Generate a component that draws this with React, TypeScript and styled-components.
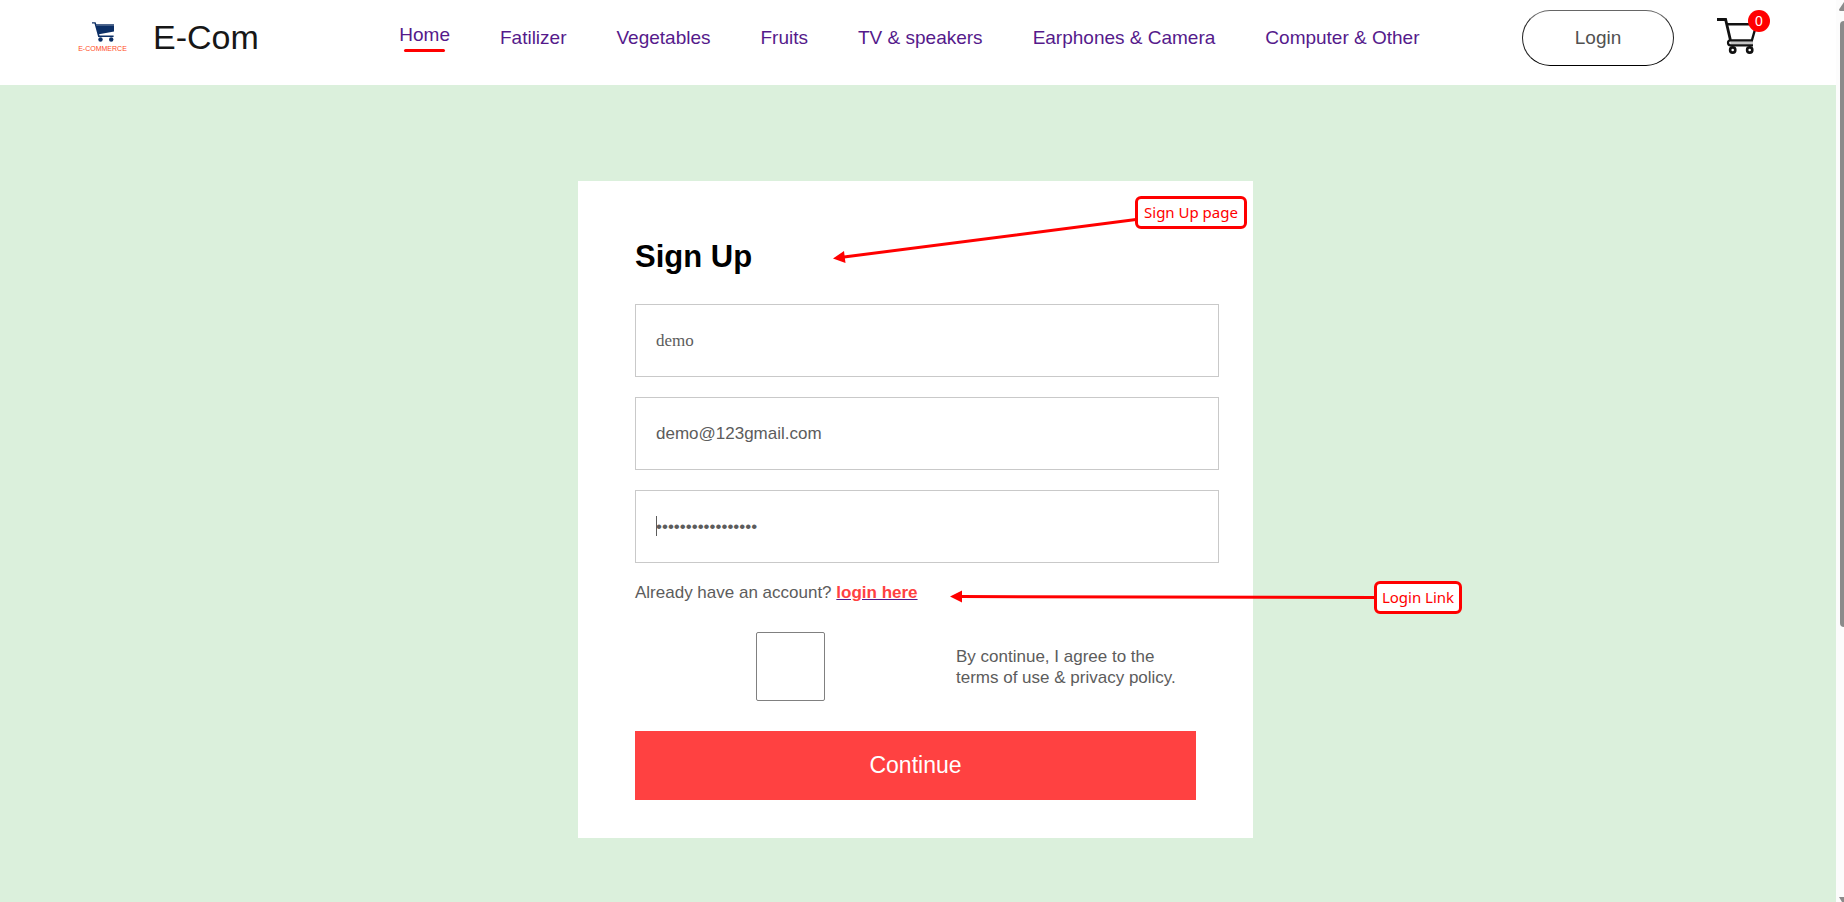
import React from "react";
import styled, { createGlobalStyle } from "styled-components";

const GlobalStyle = createGlobalStyle`
  *, *::before, *::after { box-sizing: border-box; }
  body {
    margin: 0;
    background: #ffffff;
    font-family: "Liberation Sans", Arial, sans-serif;
  }
`;

const Window = styled.div`
  display: grid;
  grid-template-columns: minmax(0, 1fr) 8px;
  min-height: 100vh;
`;

const Page = styled.div`
  display: flex;
  flex-direction: column;
`;

const Header = styled.header`
  display: flex;
  align-items: center;
  justify-content: space-between;
  padding: 10px 66px 19px 78px;
  background: #ffffff;
`;

const Brand = styled.a`
  display: flex;
  align-items: center;
  gap: 26px;
  padding: 0 38px 2px 0;
  color: #171717;
  text-decoration: none;
`;

const Logo = styled.span`
  display: flex;
  flex-direction: column;
  align-items: center;
  gap: 3px;
  width: 49px;
`;

const LogoText = styled.span`
  color: #ff4a24;
  font-size: 7px;
  line-height: 8px;
`;

const BrandName = styled.span`
  font-size: 34px;
  line-height: 38px;
`;

const Menu = styled.ul`
  display: flex;
  align-items: center;
  gap: 50px;
  margin: 0;
  padding: 0;
  list-style: none;
`;

const MenuItem = styled.li<{ $active?: boolean }>`
  display: flex;
  flex-direction: column;
  align-items: center;
  gap: 3px;
  font-size: 19px;
  line-height: 22px;
  white-space: nowrap;

  &::after {
    content: "";
    display: ${(p) => (p.$active ? "block" : "none")};
    width: 80%;
    height: 3px;
    border-radius: 10px;
    background: #ff0000;
  }
`;

const MenuLink = styled.a`
  color: #551a8b;
  text-decoration: none;
`;

const Actions = styled.div`
  display: flex;
  align-items: center;
  gap: 43px;
`;

const LoginButton = styled.button`
  width: 152px;
  height: 56px;
  border: 1px solid #222222;
  border-top-color: #666666;
  border-bottom-color: #000000;
  border-radius: 28px;
  background: #ffffff;
  color: #515151;
  font-family: inherit;
  font-size: 19px;
`;

const CartLink = styled.a`
  position: relative;
  display: block;
  width: 53px;
  height: 40px;
`;

const CartCount = styled.span`
  position: absolute;
  top: -8px;
  right: 0;
  width: 22px;
  height: 22px;
  border-radius: 11px;
  background: #ff0000;
  color: #ffffff;
  font-size: 14px;
  line-height: 22px;
  text-align: center;
`;

const Main = styled.main`
  flex: 1;
  display: flex;
  justify-content: center;
  align-items: flex-start;
  padding: 96px 5px 64px 0;
  background: #dbf0dc;
`;

const Card = styled.form`
  position: relative;
  width: 675px;
  padding: 58px 57px 38px;
  background: #ffffff;
  color: #5c5c5c;
  font-size: 17px;
  line-height: 21px;
`;

const Title = styled.h1`
  margin: 0 0 29px;
  color: #000000;
  font-size: 31px;
  line-height: 36px;
`;

const Fields = styled.div`
  display: flex;
  flex-direction: column;
  gap: 20px;
  width: calc(100% + 23px);
`;

const Field = styled.div`
  position: relative;
`;

const Input = styled.input<{ $serif?: boolean }>`
  display: block;
  width: 100%;
  height: 73px;
  padding: 0 20px;
  border: 1px solid #c9c9c9;
  outline: none;
  background: #ffffff;
  color: #5c5c5c;
  font-family: ${(p) =>
    p.$serif ? '"Liberation Serif", "Times New Roman", serif' : "inherit"};
  font-size: 17px;
`;

const Caret = styled.span`
  position: absolute;
  top: 26px;
  left: 21px;
  width: 1px;
  height: 20px;
  background: #5c5c5c;
`;

const LoginPrompt = styled.p`
  margin: 19px 0 0;
`;

const LoginHere = styled.a`
  color: #ff4141;
  font-weight: bold;
  text-decoration: underline #551a8b;
`;

const Terms = styled.div`
  display: flex;
  align-items: center;
  gap: 10px;
  margin: 29px 0 30px;
`;

const TickCell = styled.div`
  flex: 1;
  display: flex;
  justify-content: center;
`;

const Tick = styled.input`
  appearance: none;
  width: 69px;
  height: 69px;
  margin: 0;
  border: 1px solid #808080;
  border-radius: 2px;
  background: #ffffff;
`;

const TermsLabel = styled.label`
  width: 240px;
`;

const ContinueButton = styled.button`
  display: block;
  width: 100%;
  height: 69px;
  border: none;
  background: #ff4141;
  color: #ffffff;
  font-family: inherit;
  font-size: 23px;
`;

const Arrows = styled.svg`
  position: absolute;
  top: 0;
  left: 0;
  overflow: visible;
  pointer-events: none;
`;

const Callout = styled.div<{ $left: number; $top: number; $width: number }>`
  position: absolute;
  left: ${(p) => p.$left}px;
  top: ${(p) => p.$top}px;
  width: ${(p) => p.$width}px;
  height: 33px;
  border: 3px solid #ff0000;
  border-radius: 6px;
  background: #ffffff;
  color: #ff0000;
  font-family: "Noto Sans", sans-serif;
  font-size: 15px;
  line-height: 27px;
  text-align: center;
  white-space: nowrap;
`;

const Scrollbar = styled.div`
  display: flex;
  flex-direction: column;
  align-items: flex-end;
  overflow: hidden;
  background: #fcfcfc;
`;

const ScrollArrow = styled.svg`
  display: block;
  margin: 2px 0 10px;
`;

const ScrollThumb = styled.div`
  flex: 1;
  width: 4px;
  border-radius: 4px 0 0 4px;
  background: #8b8b8b;
`;

const ScrollRest = styled.div`
  height: 270px;
`;

const menu = [
  "Home",
  "Fatilizer",
  "Vegetables",
  "Fruits",
  "TV & speakers",
  "Earphones & Camera",
  "Computer & Other",
];

const LogoCart = () => (
  <svg width="22" height="20" viewBox="0 0 22 20" aria-hidden="true">
    <path d="M0 .3h3.6l.7 1.9H22V9.4L7 12.2l.5 1.2H21.6V15H6.2L2.5 1.6H0z" fill="#0c2f66" />
    <path d="M4.2 3.2H22" stroke="#5d7396" strokeWidth="1" />
    <circle cx="8.5" cy="17.5" r="2.2" fill="#0c2f66" />
    <circle cx="19.2" cy="17.5" r="2.2" fill="#0c2f66" />
  </svg>
);

const Cart = () => (
  <svg width="42" height="40" viewBox="0 0 42 40" fill="none" aria-hidden="true">
    <path d="M0 1.5H8.6L13.4 22" stroke="#111" strokeWidth="2.8" />
    <path d="M10.2 6.3H39.5L35 22" stroke="#111" strokeWidth="2.4" />
    <path d="M13.5 24.8H36" stroke="#c4c4c4" strokeWidth="3" />
    <path d="M36 22.3H13.5a2.5 2.5 0 0 0 0 5H36" stroke="#111" strokeWidth="2.2" />
    <circle cx="15.7" cy="32" r="2.6" stroke="#111" strokeWidth="2.6" />
    <circle cx="32.7" cy="32" r="2.6" stroke="#111" strokeWidth="2.6" />
  </svg>
);

export default function App() {
  return (
    <>
      <GlobalStyle />
      <Window>
        <Page>
          <Header>
            <Brand href="#">
              <Logo>
                <LogoCart />
                <LogoText>E-COMMERCE</LogoText>
              </Logo>
              <BrandName>E-Com</BrandName>
            </Brand>
            <nav>
              <Menu>
                {menu.map((name, i) => (
                  <MenuItem key={name} $active={i === 0}>
                    <MenuLink href="#">{name}</MenuLink>
                  </MenuItem>
                ))}
              </Menu>
            </nav>
            <Actions>
              <LoginButton type="button">Login</LoginButton>
              <CartLink href="#" aria-label="Cart">
                <Cart />
                <CartCount>0</CartCount>
              </CartLink>
            </Actions>
          </Header>
          <Main>
            <Card onSubmit={(e) => e.preventDefault()}>
              <Title>Sign Up</Title>
              <Fields>
                <Field>
                  <Input $serif type="text" aria-label="Your name" defaultValue="demo" />
                </Field>
                <Field>
                  <Input type="email" aria-label="Email address" defaultValue="demo@123gmail.com" />
                </Field>
                <Field>
                  <Input type="password" aria-label="Password" defaultValue="demo1234567890abc" />
                  <Caret />
                </Field>
              </Fields>
              <LoginPrompt>
                Already have an account? <LoginHere href="#">login here</LoginHere>
              </LoginPrompt>
              <Terms>
                <TickCell>
                  <Tick type="checkbox" id="terms" />
                </TickCell>
                <TermsLabel htmlFor="terms">
                  By continue, I agree to the terms of use &amp; privacy policy.
                </TermsLabel>
              </Terms>
              <ContinueButton type="submit">Continue</ContinueButton>
              <Arrows width="1" height="1" aria-hidden="true">
                <path d="M558 38.5L266 76M797 416.5L383 415.6" stroke="#ff0000" strokeWidth="3" />
                <path d="M255 77.5l11-7.5 1.5 12zM372 415.5l12-6v12z" fill="#ff0000" />
              </Arrows>
              <Callout $left={557} $top={15} $width={112}>Sign Up page</Callout>
              <Callout $left={796} $top={400} $width={88}>Login Link</Callout>
            </Card>
          </Main>
        </Page>
        <Scrollbar aria-hidden="true">
          <ScrollArrow width="5" height="9" viewBox="0 0 5 9">
            <path d="M5 0L0 7.5Q0 9 1.5 9H5z" fill="#8b8b8b" />
          </ScrollArrow>
          <ScrollThumb />
          <ScrollRest />
          <svg width="5" height="5" viewBox="0 0 5 5">
            <path d="M0 0h5v5H3z" fill="#8b8b8b" />
          </svg>
        </Scrollbar>
      </Window>
    </>
  );
}
